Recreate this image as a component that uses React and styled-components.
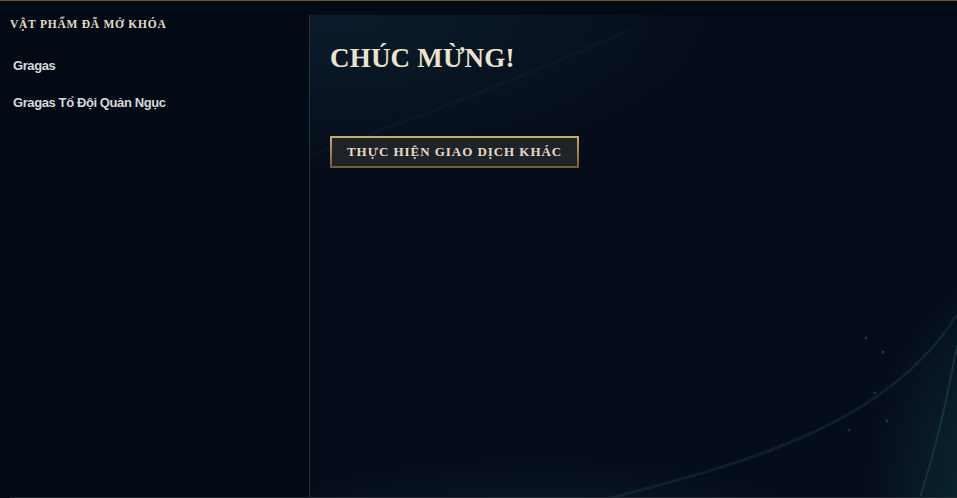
import React from "react";
import styled, { createGlobalStyle } from "styled-components";

const Global = createGlobalStyle`
  html, body { margin: 0; padding: 0; background: #010a13; }
  body { width: 957px; height: 498px; overflow: hidden; }
  #root { height: 498px; }
`;

const Frame = styled.div`
  width: 957px;
  height: 498px;
  box-sizing: border-box;
  border-top: 1px solid #6e5426;
  background: #020a13;
  display: grid;
  grid-template-columns: 309px 1fr;
`;

const Sidebar = styled.aside`
  background:
    linear-gradient(#262c33, #262c33) no-repeat 10px 100% / calc(100% - 10px) 1px,
    #020a13;
  padding: 16px 0 0 10px;
  display: flex;
  flex-direction: column;
`;

const SideTitle = styled.h3`
  margin: 0 0 27px;
  font-family: "Liberation Serif", "DejaVu Serif", serif;
  font-weight: 700;
  font-size: 11.5px;
  letter-spacing: 0.75px;
  color: #e4dcc8;
  line-height: 14px;
`;

const ItemList = styled.ul`
  list-style: none;
  margin: 0;
  padding: 0 0 0 3px;
  display: flex;
  flex-direction: column;
  gap: 21px;
`;

const Item = styled.li`
  font-family: "Liberation Sans", Arial, sans-serif;
  font-weight: 700;
  font-size: 13px;
  letter-spacing: -0.4px;
  color: #d6d9dc;
  line-height: 16px;
`;

const Main = styled.main`
  margin-top: 14px;
  border-left: 1px solid #263240;
  border-bottom: 1px solid #262c33;
  position: relative;
  overflow: hidden;
  padding: 27px 0 0 20px;
  background:
    radial-gradient(ellipse 520px 220px at 5% 0%, rgba(20, 55, 75, 0.35), transparent 70%),
    radial-gradient(ellipse 240px 340px at 112% 100%, rgba(20, 90, 100, 0.5), transparent 70%),
    radial-gradient(ellipse 420px 110px at 35% 108%, rgba(15, 50, 65, 0.4), transparent 70%),
    #060d1a;
`;

const Swirl = styled.svg`
  position: absolute;
  inset: 0;
  pointer-events: none;
`;

const Heading = styled.h1`
  position: relative;
  margin: 0 0 62px;
  font-family: "Liberation Serif", "DejaVu Serif", serif;
  font-weight: 700;
  font-size: 27px;
  letter-spacing: 0.2px;
  line-height: 32px;
  color: #ede2cb;
`;

const Button = styled.button`
  position: relative;
  height: 32px;
  padding: 0 15px;
  border: 2px solid #a78a55;
  border-image: linear-gradient(#c8aa6e, #7a5c2a) 1;
  background: #1e2328;
  color: #e6dcc4;
  font-family: "Liberation Serif", "DejaVu Serif", serif;
  font-weight: 700;
  font-size: 13px;
  letter-spacing: 0.95px;
  cursor: pointer;
`;

export default function App() {
  return (
    <>
      <Global />
      <Frame>
        <Sidebar>
          <SideTitle>VẬT PHẨM ĐÃ MỞ KHÓA</SideTitle>
          <ItemList>
            <Item>Gragas</Item>
            <Item>Gragas Tổ Đội Quản Ngục</Item>
          </ItemList>
        </Sidebar>
        <Main>
          <Swirl width="647" height="483" viewBox="0 0 647 483">
            <path d="M0 140 C 120 100, 240 50, 320 15" stroke="rgba(60,120,140,0.07)" strokeWidth="3" fill="none" />
            <path d="M300 483 C 450 445, 580 405, 647 300" stroke="rgba(60,150,160,0.14)" strokeWidth="3" fill="none" />
            <path d="M610 483 C 630 420, 640 370, 647 330" stroke="rgba(70,160,170,0.18)" strokeWidth="2" fill="none" />
            <circle cx="556" cy="323" r="1.5" fill="rgba(80,170,180,0.3)" />
            <circle cx="573" cy="337" r="1.5" fill="rgba(80,170,180,0.3)" />
            <circle cx="565" cy="378" r="1.5" fill="rgba(80,170,180,0.25)" />
            <circle cx="577" cy="406" r="1.5" fill="rgba(80,170,180,0.25)" />
            <circle cx="539" cy="415" r="1.5" fill="rgba(80,170,180,0.25)" />
          </Swirl>
          <Heading>CHÚC MỪNG!</Heading>
          <Button>THỰC HIỆN GIAO DỊCH KHÁC</Button>
        </Main>
      </Frame>
    </>
  );
}
